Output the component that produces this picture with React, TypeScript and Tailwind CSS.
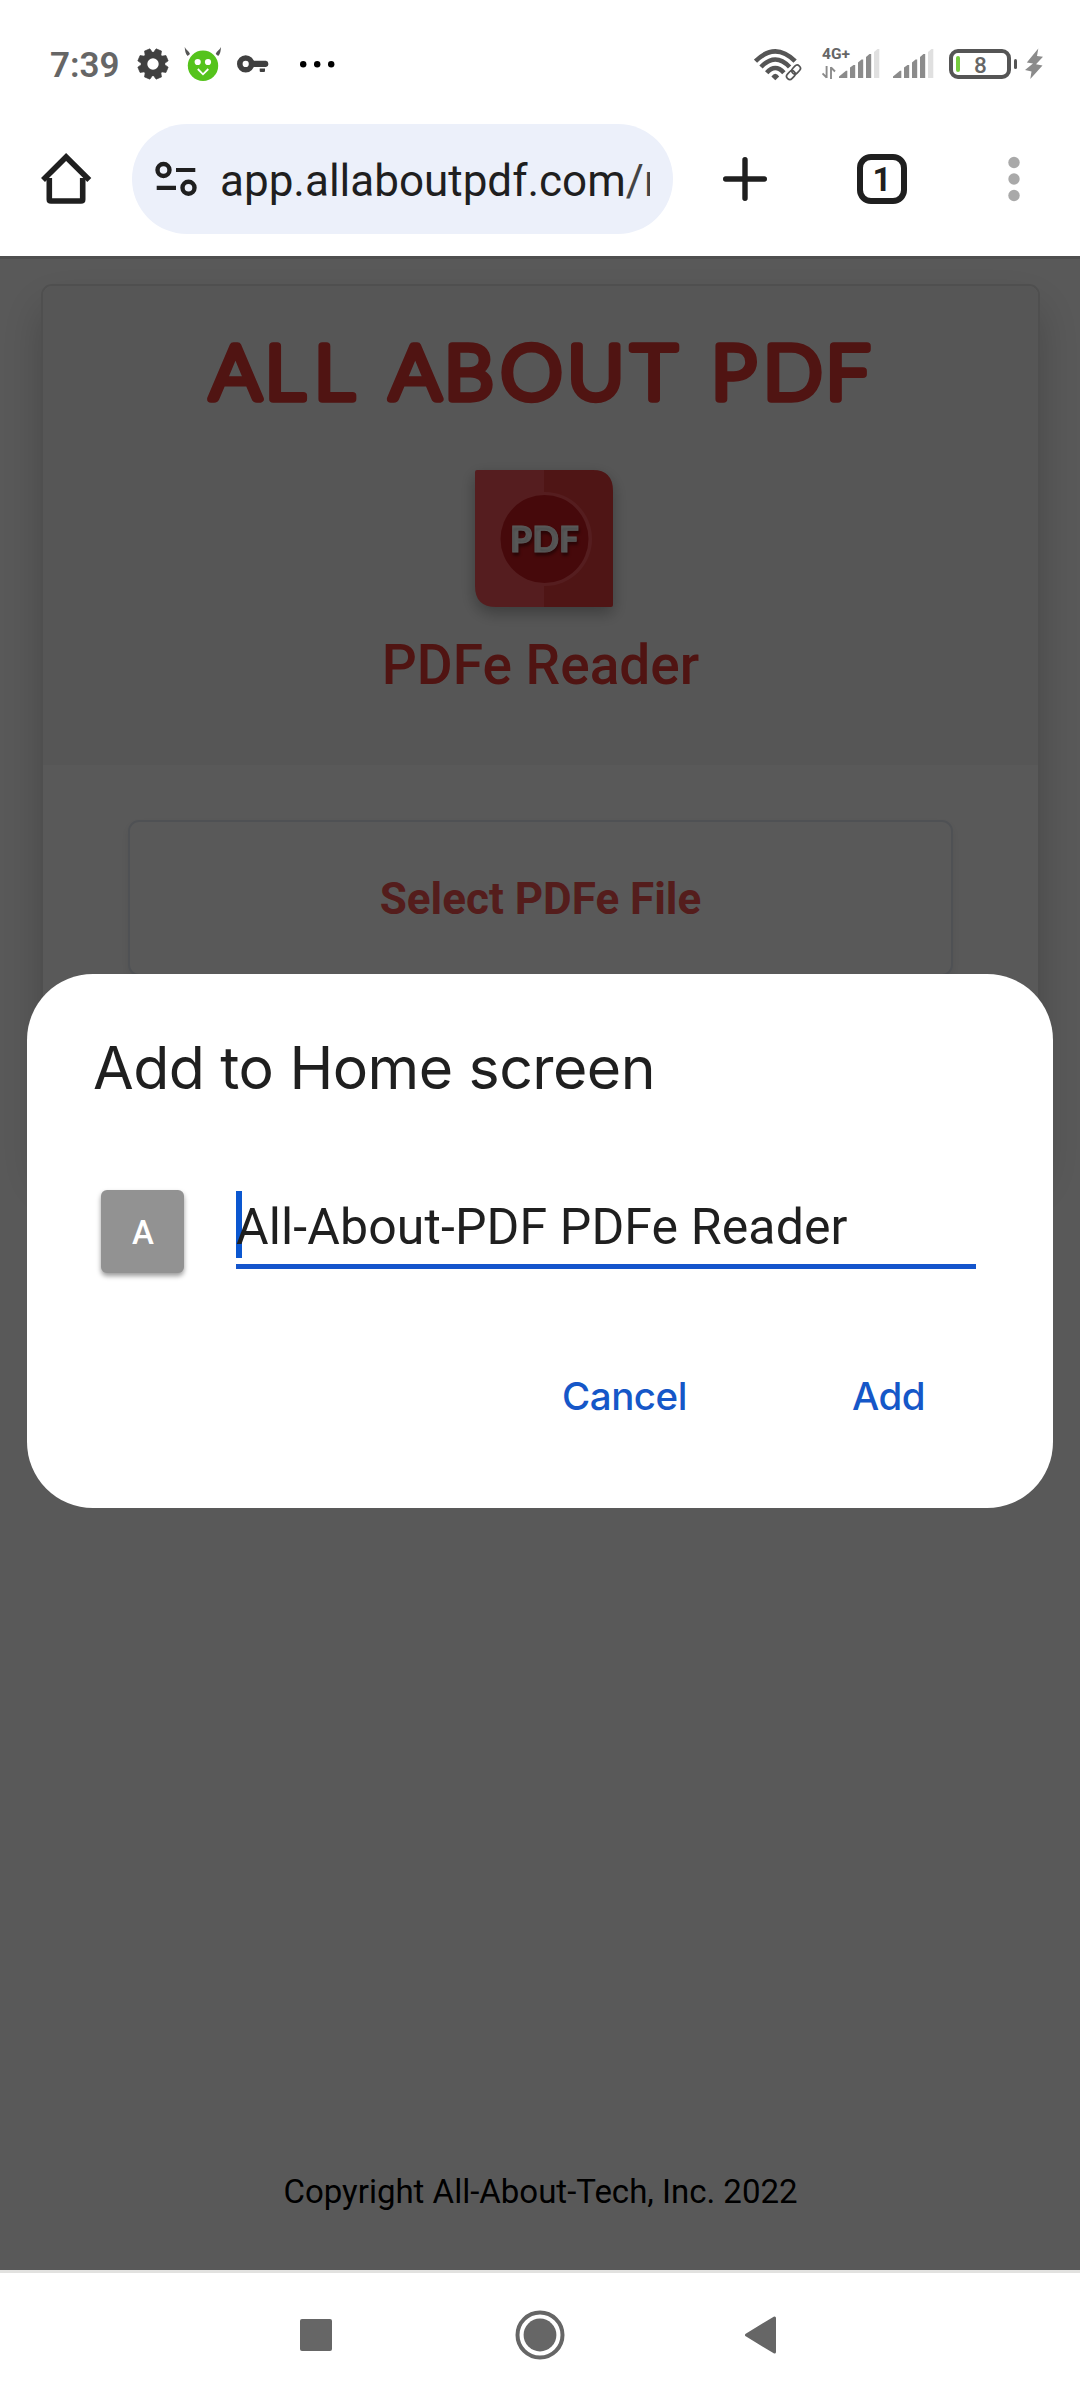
import type { ReactNode } from "react";

function Slot({ className, children }: { className: string; children: ReactNode }) {
  return <div className={"shrink-0 " + className}>{children}</div>;
}

function GearIcon() {
  const teeth = [0, 45, 90, 135, 180, 225, 270, 315];
  return (
    <svg width="32" height="32" viewBox="-16 -16 32 32" fill="#404040">
      {teeth.map((a) => (
        <path key={a} d="M-4.400 -9 L-2.900 -15.200 H2.900 L4.400 -9 Z" transform={`rotate(${a + 22.5})`} stroke="#404040" strokeWidth=".6" strokeLinejoin="round" />
      ))}
      <circle r="8.900" fill="none" stroke="#404040" strokeWidth="6.400" />
    </svg>
  );
}

function DevilIcon() {
  return (
    <svg width="38" height="36" viewBox="184 46 38 36">
      <path d="M184.700 47 C186 50 189 51 190 54 L187.600 56 C185.500 54 185 51 184.700 47 Z M221 47 C219.700 50 216.700 51 215.700 54 L218.200 56 C220.400 54 220.700 51 221 47 Z" fill="#555" />
      <circle cx="203" cy="65.800" r="15.200" fill="#55c31c" />
      <circle cx="197.700" cy="62" r="3.100" fill="#fff" />
      <circle cx="208" cy="62" r="3.100" fill="#fff" />
      <path d="M197.800 69 L203 74.300 L208.300 69" fill="none" stroke="#fff" strokeWidth="1.800" />
    </svg>
  );
}

function KeyIcon() {
  return (
    <svg width="32" height="18" viewBox="237 55.500 32 18" fill="#404040">
      <circle cx="245.700" cy="64.400" r="5.900" fill="none" stroke="#404040" strokeWidth="5.600" />
      <path d="M251 61.300 H266 a3.200 3.200 0 0 1 0 6.200 H251 Z" />
      <path d="M259.700 69 H265 V71.500 a1 1 0 0 1 -1 1 H260.700 a1 1 0 0 1 -1 -1 Z" />
    </svg>
  );
}

function WifiIcon() {
  return (
    <svg width="48" height="33" viewBox="754 48 48 33" fill="none" stroke="#555" strokeLinecap="butt">
      <path d="M755.500 61.200 Q775.300 41.500 795.100 61.200" strokeWidth="4.600" />
      <path d="M761 67 Q775.300 52 789.600 67" strokeWidth="4.600" />
      <path d="M766.700 72.700 Q775.300 63.300 783.900 72.700" strokeWidth="4.600" />
      <path d="M771.400 76.500 Q775.300 71 779.200 76.500 L775.300 80.200 Z" fill="#555" stroke="none" />
      <g transform="translate(793.500 72.300) rotate(-47)">
        <path d="M-7.500 0 H7.500" stroke="#fff" strokeWidth="9" />
        <g strokeWidth="1.700">
          <rect x="-8.600" y="-3.200" width="9.600" height="6.400" rx="3.200" />
          <rect x="-1" y="-3.200" width="9.600" height="6.400" rx="3.200" />
        </g>
      </g>
    </svg>
  );
}

function SignalBars() {
  return (
    <svg width="41" height="30" viewBox="839 49 41 30" fill="#8b8b8b">
      <path d="M839 78 V76.500 L846 70.700 H847.300 V78 Z" />
      <path d="M850 78 V67.500 L853.500 65 H855.200 V78 Z" />
      <path d="M858 78 V62.500 L861.500 59.500 H863.200 V78 Z" />
      <path d="M866 78 V57 L869.500 54 H871.200 V78 Z" />
      <path d="M874 78 V52 L877.500 49 H879.300 V78 Z" fill="#e0e0e0" />
    </svg>
  );
}

function StatusBar() {
  return (
    <div className="flex h-[108px] items-start bg-white">
      <Slot className="mt-[45px] ml-[50px] w-[71px] text-[35px] leading-[41px] font-semibold text-[#666]">7:39</Slot>
      <Slot className="mt-[48px] ml-[16px]"><GearIcon /></Slot>
      <Slot className="mt-[46px] ml-[15px]"><DevilIcon /></Slot>
      <Slot className="mt-[55px] ml-[15px]"><KeyIcon /></Slot>
      <Slot className="mt-[61px] ml-[31px]">
        <svg width="36" height="7" viewBox="0 0 36 7"><circle cx="3.200" cy="3.200" r="3.200" /><circle cx="17.200" cy="3.200" r="3.200" /><circle cx="31.200" cy="3.200" r="3.200" /></svg>
      </Slot>
      <div className="flex-1" />
      <Slot className="mt-[48px] mr-[20px]"><WifiIcon /></Slot>
      <div className="flex w-[58px] shrink-0 items-start">
        <div className="mt-[47px] flex w-[17px] shrink-0 flex-col">
          <span className="h-[18px] text-[15.500px] leading-[14px] font-bold whitespace-nowrap text-[#666]">4G+</span>
          <svg width="14" height="13" viewBox="0 0 14 13" fill="none" stroke="#8b8b8b" strokeWidth="1.900" className="mt-px">
            <path d="M4.600 0 V12 M4.600 11.500 L0.500 7.500 M9 13 V1 M9 1.500 L13 5.500" />
          </svg>
        </div>
        <div className="mt-[49px]"><SignalBars /></div>
      </div>
      <Slot className="mt-[49px] ml-[13px]"><SignalBars /></Slot>
      <div className="mt-[49px] ml-[15px] flex h-[30px] w-[62px] shrink-0 items-center rounded-[9px] border-4 border-[#555] pl-[3px]">
        <span className="h-[16px] w-[4px] rounded-[2px] bg-[#76cc3e]" />
        <span className="mt-px ml-[14px] text-[22.500px] leading-[22px] font-medium text-[#666]">8</span>
      </div>
      <div className="mt-[59px] ml-[3px] h-[10px] w-[3px] shrink-0 rounded-[1.500px] bg-[#555]" />
      <Slot className="mt-[48px] mr-[37px] ml-[8px]">
        <svg width="18" height="31" viewBox="0 0 18 31" fill="#8b8b8b"><path d="M13.300 .5 L1.800 14.500 L8 15.500 L0 22 L6.500 23.500 L5.300 31 L17.500 17.500 L11 16.300 L18 8.800 L12 8 Z" /></svg>
      </Slot>
    </div>
  );
}

function Toolbar() {
  return (
    <div className="flex h-[148px] items-start bg-white">
      <Slot className="mt-[45px] ml-[40px]">
        <svg width="52" height="52" viewBox="40 153 52 52" fill="none" stroke="#1f1f1f" strokeWidth="5.600" strokeLinejoin="round">
          <path d="M49.300 178 V199.500 Q49.300 201 51 201 H81 Q82.700 201 82.700 199.500 V178" />
          <path d="M43 180 L66.100 157 L89.300 180" strokeLinejoin="miter" />
        </svg>
      </Slot>
      <div className="mt-[16px] ml-[40px] flex h-[110px] w-[541px] shrink-0 items-center overflow-hidden rounded-full bg-[#ecf0fa] pl-[22px]">
        <svg width="44" height="38" viewBox="154 160 44 38" fill="none" stroke="#1f1f1f" strokeWidth="4.400" className="shrink-0">
          <circle cx="163.500" cy="170" r="6" />
          <path d="M176 170 H195.300 M156.700 187.800 H176" strokeWidth="4.200" />
          <circle cx="188.500" cy="187.800" r="6" />
        </svg>
        <div className="mt-[3px] ml-[22px] w-[430px] overflow-hidden text-[44px] leading-[60px] whitespace-nowrap text-[#1f1f1f]">
          app.allaboutpdf.com<span className="text-[#444]">/r</span>
        </div>
      </div>
      <Slot className="mt-[49px] ml-[50px]">
        <svg width="44" height="44" viewBox="0 0 44 44" stroke="#1f1f1f" strokeWidth="5.400" strokeLinecap="round"><path d="M22 2.700 V41.300 M2.700 22 H41.300" /></svg>
      </Slot>
      <div className="mt-[46px] ml-[90px] flex h-[50px] w-[50px] shrink-0 items-center justify-center rounded-[14px] border-[6px] border-[#1f1f1f] pt-px text-[33px] leading-[38px] font-bold text-[#1f1f1f]">1</div>
      <Slot className="mt-[48px] ml-[101px]">
        <svg width="12" height="46" viewBox="0 0 12 46" fill="#a9a9a9"><circle cx="6" cy="6.500" r="5.700" /><circle cx="6" cy="23" r="5.700" /><circle cx="6" cy="39.500" r="5.700" /></svg>
      </Slot>
    </div>
  );
}

function Wordmark() {
  return (
    <svg width="668" height="66" viewBox="206 340 668 66" className="overflow-visible" fontFamily="Lato" fontWeight="300" fontSize="74" fill="#e53935" stroke="#e53935" strokeWidth="7.500" strokeLinejoin="round">
      <text transform="scale(1.05 1)" y="399.500" x="200 252.300 299.300 371.200 423 477 540.500 601.500 677.500 727 786.500">ALLABOUTPDF</text>
    </svg>
  );
}

function PdfLogo() {
  return (
    <svg width="138" height="138" viewBox="475 470 138 138" className="overflow-visible drop-shadow-[0_6px_8px_rgba(0,0,0,0.3)]">
      <path d="M475 472 Q475 470 477 470 H544 V607 H496 Q475 607 475 586 Z" fill="#f2555a" />
      <path d="M544 470 H593 Q613 470 613 491 V605 Q613 607 611 607 H544 Z" fill="#e33c3c" />
      <circle cx="545" cy="539" r="47" fill="#f2555a" />
      <circle cx="544.500" cy="539" r="44" fill="#c91a20" />
      <text x="510" y="552" fontFamily="Lato" fontWeight="900" fontSize="36" textLength="69" lengthAdjust="spacingAndGlyphs" fill="#fff" stroke="#fff" strokeWidth=".8" className="[text-shadow:1px_3px_3px_rgba(0,0,0,0.4)]">PDF</text>
    </svg>
  );
}

function PageContent() {
  return (
    <div className="flex h-full flex-col items-center">
      <div className="mt-[28px] flex h-[880px] w-[999px] shrink-0 flex-col rounded-[11px] border-2 border-[#e2e2e2] bg-white shadow-[0_22px_44px_rgba(0,0,0,0.2)]">
        <div className="flex h-[479px] flex-col items-center rounded-t-[9px] bg-[#f7f7f7] pt-[54px]">
          <Wordmark />
          <div className="mt-[64px] ml-[8px]"><PdfLogo /></div>
          <h2 className="mt-[24px] ml-px text-[55px] leading-[66px] font-medium text-[#e53935]">PDFe Reader</h2>
        </div>
        <div className="flex flex-col items-center pt-[55px]">
          <div className="flex h-[156px] w-[825px] items-center justify-center rounded-[11px] border-2 border-[#e2e8f0] bg-white pt-[2px] pl-px text-[44px] font-bold text-[#ef5350] shadow-[0_4px_8px_rgba(0,0,0,0.08)]">
            Select PDFe File
          </div>
        </div>
      </div>
      <div className="flex-1" />
      <p className="mb-[58px] ml-px text-[33px] leading-[40px] text-black">Copyright All-About-Tech, Inc. 2022</p>
    </div>
  );
}

function AddDialog() {
  return (
    <div className="absolute top-[718px] left-[27px] flex h-[534px] w-[1026px] flex-col rounded-[66px] bg-white">
      <h1 className="mt-[59px] ml-[66px] font-['Inter'] text-[59px] leading-[70px] tracking-[-0.550px] whitespace-nowrap text-[#1f1f1f]">Add to Home screen</h1>
      <div className="mt-[87px] flex items-start pl-[74px]">
        <div className="flex h-[83px] w-[83px] items-center justify-center rounded-[6px] bg-[#929292] pt-[2px] pl-px text-[33px] font-medium text-white shadow-[0_3px_5px_rgba(0,0,0,0.4)]">A</div>
        <div className="relative ml-[52px] h-[79px] w-[740px] border-b-[5px] border-[#1455cc]">
          <span className="absolute top-[1px] left-0 h-[67px] w-[6px] bg-[#0b57d0]" />
          <span className="relative block text-[50px] leading-[74px] tracking-[0.120px] whitespace-nowrap text-[#1f1f1f]">All-About-PDF PDFe Reader</span>
        </div>
      </div>
      <div className="mt-[97px] flex justify-end pr-[128px] font-['Inter'] text-[38.500px] leading-[52px] font-medium tracking-[-0.500px] text-[#1557c8]">
        <span className="mr-[165px]">Cancel</span>
        <span>Add</span>
      </div>
    </div>
  );
}

function NavBar() {
  return (
    <div className="flex h-[130px] items-start border-t-[3px] border-[#e2e2e0] bg-white">
      <div className="mt-[46px] ml-[300px] h-[32px] w-[32px] rounded-[2px] bg-[#666]" />
      <svg width="50" height="50" viewBox="-25 -25 50 50" className="mt-[37px] ml-[183px]"><circle r="22.500" fill="none" stroke="#666" strokeWidth="4" /><circle r="16.400" fill="#666" /></svg>
      <svg width="32" height="38" viewBox="0 0 32 38" className="mt-[43px] ml-[180px]" fill="#666" stroke="#666" strokeWidth="3" strokeLinejoin="round"><path d="M1.500 19 L29.500 2 V36 Z" /></svg>
    </div>
  );
}

export default function App() {
  return (
    <div className="flex h-[2400px] w-[1080px] flex-col overflow-hidden bg-white font-['Roboto',sans-serif]">
      <StatusBar />
      <Toolbar />
      <main className="relative h-[2014px] shrink-0 overflow-hidden bg-white">
        <PageContent />
        <div className="absolute inset-0 border-t-[3px] border-black/10 bg-black/65" />
        <AddDialog />
      </main>
      <NavBar />
    </div>
  );
}
